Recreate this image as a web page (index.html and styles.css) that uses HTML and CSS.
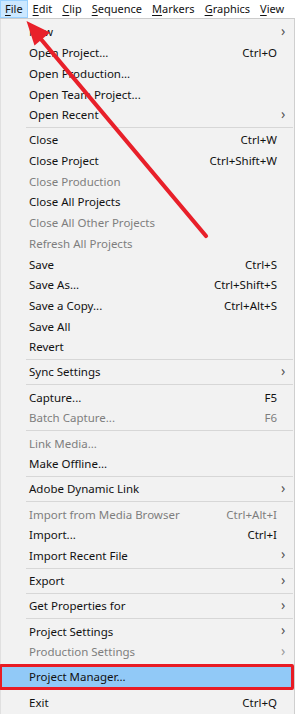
FILE: index.html
```html
<!DOCTYPE html>
<html>
<head>
<meta charset="utf-8">
<link rel="stylesheet" href="styles.css">
</head>
<body>
<div class="app">
  <div class="menubar">
    <span class="top active"><u>F</u>ile</span>
    <span class="top"><u>E</u>dit</span>
    <span class="top"><u>C</u>lip</span>
    <span class="top"><u>S</u>equence</span>
    <span class="top"><u>M</u>arkers</span>
    <span class="top"><u>G</u>raphics</span>
    <span class="top"><u>V</u>iew</span>
  </div>
  <div class="menu">
    <div class="item"><span class="label">New</span><span class="key"></span><span class="sub">›</span></div>
    <div class="item"><span class="label">Open Project...</span><span class="key">Ctrl+O</span><span class="sub"></span></div>
    <div class="item"><span class="label">Open Production...</span><span class="key"></span><span class="sub"></span></div>
    <div class="item"><span class="label">Open Team Project...</span><span class="key"></span><span class="sub"></span></div>
    <div class="item"><span class="label">Open Recent</span><span class="key"></span><span class="sub">›</span></div>
    <div class="sep"></div>
    <div class="item"><span class="label">Close</span><span class="key">Ctrl+W</span><span class="sub"></span></div>
    <div class="item"><span class="label">Close Project</span><span class="key">Ctrl+Shift+W</span><span class="sub"></span></div>
    <div class="item off"><span class="label">Close Production</span><span class="key"></span><span class="sub"></span></div>
    <div class="item"><span class="label">Close All Projects</span><span class="key"></span><span class="sub"></span></div>
    <div class="item off"><span class="label">Close All Other Projects</span><span class="key"></span><span class="sub"></span></div>
    <div class="item off"><span class="label">Refresh All Projects</span><span class="key"></span><span class="sub"></span></div>
    <div class="item"><span class="label">Save</span><span class="key">Ctrl+S</span><span class="sub"></span></div>
    <div class="item"><span class="label">Save As...</span><span class="key">Ctrl+Shift+S</span><span class="sub"></span></div>
    <div class="item"><span class="label">Save a Copy...</span><span class="key">Ctrl+Alt+S</span><span class="sub"></span></div>
    <div class="item"><span class="label">Save All</span><span class="key"></span><span class="sub"></span></div>
    <div class="item"><span class="label">Revert</span><span class="key"></span><span class="sub"></span></div>
    <div class="sep"></div>
    <div class="item"><span class="label">Sync Settings</span><span class="key"></span><span class="sub">›</span></div>
    <div class="sep"></div>
    <div class="item"><span class="label">Capture...</span><span class="key">F5</span><span class="sub"></span></div>
    <div class="item off"><span class="label">Batch Capture...</span><span class="key">F6</span><span class="sub"></span></div>
    <div class="sep"></div>
    <div class="item off"><span class="label">Link Media...</span><span class="key"></span><span class="sub"></span></div>
    <div class="item"><span class="label">Make Offline...</span><span class="key"></span><span class="sub"></span></div>
    <div class="sep"></div>
    <div class="item"><span class="label">Adobe Dynamic Link</span><span class="key"></span><span class="sub">›</span></div>
    <div class="sep"></div>
    <div class="item off"><span class="label">Import from Media Browser</span><span class="key">Ctrl+Alt+I</span><span class="sub"></span></div>
    <div class="item"><span class="label">Import...</span><span class="key">Ctrl+I</span><span class="sub"></span></div>
    <div class="item"><span class="label">Import Recent File</span><span class="key"></span><span class="sub">›</span></div>
    <div class="sep"></div>
    <div class="item"><span class="label">Export</span><span class="key"></span><span class="sub">›</span></div>
    <div class="sep"></div>
    <div class="item"><span class="label">Get Properties for</span><span class="key"></span><span class="sub">›</span></div>
    <div class="sep"></div>
    <div class="item"><span class="label">Project Settings</span><span class="key"></span><span class="sub">›</span></div>
    <div class="item off"><span class="label">Production Settings</span><span class="key"></span><span class="sub">›</span></div>
    <div class="sep"></div>
    <div class="item hot"><span class="label">Project Manager...</span><span class="key"></span><span class="sub"></span></div>
    <div class="sep"></div>
    <div class="item"><span class="label">Exit</span><span class="key">Ctrl+Q</span><span class="sub"></span></div>
  </div>
  <svg class="arrow" width="295" height="714" viewBox="0 0 295 714">
    <line x1="206" y1="236" x2="40" y2="38" stroke="#e8202a" stroke-width="4.2" stroke-linecap="round"/>
    <polygon points="26.5,21 50,32.5 34.5,45.5" fill="#e8202a"/>
  </svg>
</div>
</body>
</html>
```

FILE: styles.css
```css
* { box-sizing: border-box; }
html, body {
  margin: 0;
  padding: 0;
  background: #ffffff;
}
body {
  font-family: "Noto Sans", "Open Sans", "Liberation Sans", sans-serif;
  font-size: 11.5px;
  color: #111111;
  width: 295px;
  height: 714px;
  overflow: hidden;
}
.app {
  position: relative;
  width: 295px;
  height: 714px;
}
.menubar {
  display: flex;
  height: 19px;
  background: #ffffff;
  border-bottom: 1px solid #cccccc;
  font-size: 11px;
}
.top {
  display: flex;
  align-items: center;
  padding: 0 5px;
  height: 18px;
  line-height: 16px;
}
.top.active {
  background: #cce8ff;
  box-shadow: inset 0 0 0 1px #99d1ff;
}
.top u {
  text-decoration-thickness: 1px;
  text-underline-offset: 2px;
}
.menu {
  background: #f2f2f2;
  border-left: 1px solid #e0e0e0;
  border-right: 1px solid #cfcfcf;
  padding: 2.6px 1px 0 1px;
  height: 695px;
}
.item {
  display: grid;
  grid-template-columns: 1fr auto 16px;
  align-items: center;
  height: 20.7px;
  padding-left: 27px;
  position: relative;
}
.label {
  white-space: nowrap;
}
.key {
  text-align: right;
  white-space: nowrap;
}
.sub {
  font-size: 14px;
  color: #555555;
  padding-left: 4px;
  line-height: 1;
  position: relative;
  top: -1px;
}
.off {
  color: #7e7e7e;
}
.off .sub {
  color: #9a9a9a;
}
.sep {
  height: 1px;
  background: #d7d7d7;
  margin: 1.75px 0 1.75px 24px;
}
.hot {
  background: #91c9f7;
}
.hot::after {
  content: "";
  position: absolute;
  left: -3px;
  right: -1px;
  top: -2.6px;
  bottom: -2.6px;
  border: 3px solid #e81c24;
  border-radius: 2px;
}
.arrow {
  position: absolute;
  left: 0;
  top: 0;
  pointer-events: none;
}
```
